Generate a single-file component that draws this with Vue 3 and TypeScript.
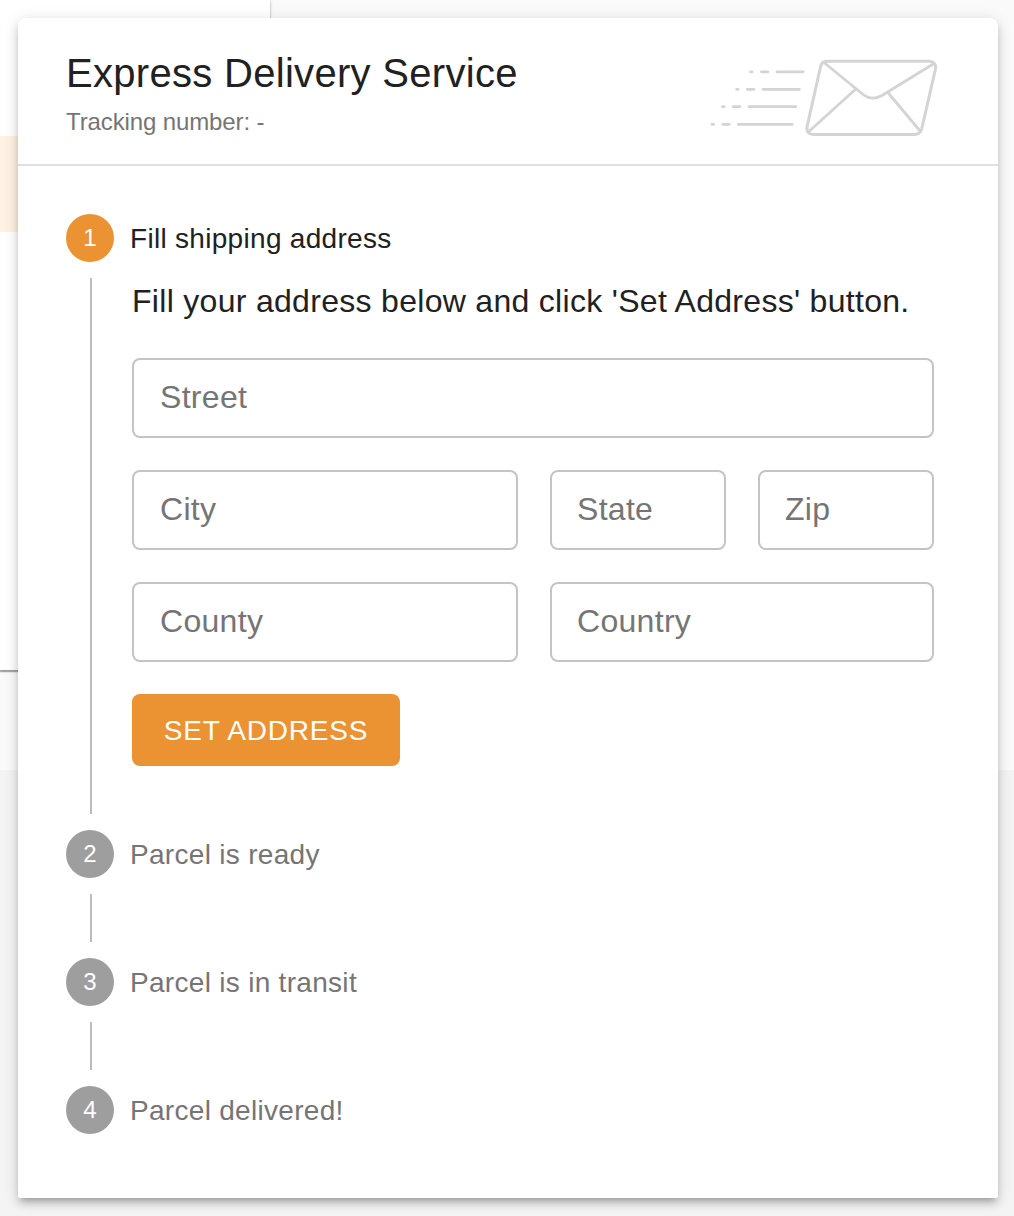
<script setup lang="ts">
interface Step {
  id: number
  label: string
}

interface Field {
  name: string
  placeholder: string
}

const steps: Step[] = [
  { id: 1, label: 'Fill shipping address' },
  { id: 2, label: 'Parcel is ready' },
  { id: 3, label: 'Parcel is in transit' },
  { id: 4, label: 'Parcel delivered!' },
]

const fields: Field[] = [
  { name: 'street', placeholder: 'Street' },
  { name: 'city', placeholder: 'City' },
  { name: 'state', placeholder: 'State' },
  { name: 'zip', placeholder: 'Zip' },
  { name: 'county', placeholder: 'County' },
  { name: 'country', placeholder: 'Country' },
]

const activeStep = 1
</script>

<template>
  <div class="stage">
    <div class="backdrop">
      <div class="backdrop-main">
        <div class="drawer"><div class="drawer-selected"></div></div>
      </div>
    </div>

    <main class="card">
      <header class="header">
        <div>
          <h1 class="title">Express Delivery Service</h1>
          <p class="tracking">Tracking number: -</p>
        </div>
        <svg class="logo" width="230" height="80" viewBox="709 58 230 80" fill="none" stroke="#d4d4d4" stroke-width="2.8" stroke-linecap="round" stroke-linejoin="round">
          <path d="M750.5 71.8h1.6M761.3 71.8h6.6M777 71.8h26.2M736.6 89.3h1.6M747.3 89.3h6.6M763 89.3h36.4M722.5 106.7h1.6M733.3 106.7h6.6M749 106.7h46.8M712 124.3h1.6M722.8 124.3h6.6M738.3 124.3h54" />
          <path stroke-width="3" d="M827 61.3H929.5C933.8 61.3 936.4 64.5 935.5 69L921.8 128.5C920.8 132.4 918.5 134.5 914.5 134.5H814C808.8 134.5 806.2 131.5 807.1 126.5L820.6 66.5C821.5 63 823.5 61.3 827 61.3Z" />
          <path d="M824 62.5L862.5 94Q871.5 101.5 882 95.5L934 63.5M855.3 89.5L808.3 132M887.5 92L920.5 131.5" />
        </svg>
      </header>

      <ol class="stepper">
        <li v-for="step in steps" :key="step.id" class="step">
          <div class="step-head" :class="{ active: step.id === activeStep }">
            <span class="badge">{{ step.id }}</span>
            <span class="label">{{ step.label }}</span>
          </div>
          <div v-if="step.id < steps.length" class="step-body">
            <form v-if="step.id === activeStep" class="form" @submit.prevent>
              <p class="hint">Fill your address below and click 'Set Address' button.</p>
              <div class="fields">
                <input
                  v-for="field in fields"
                  :key="field.name"
                  class="field"
                  :class="field.name"
                  type="text"
                  :placeholder="field.placeholder"
                  :aria-label="field.placeholder"
                />
              </div>
              <button class="submit" type="submit">SET ADDRESS</button>
            </form>
          </div>
        </li>
      </ol>
    </main>
  </div>
</template>

<style>
body {
  margin: 0;
  overflow: hidden;
}
</style>

<style scoped>
.stage {
  display: grid;
  width: 1014px;
  height: 1216px;
  overflow: hidden;
  font-family: Helvetica, 'Liberation Sans', Arial, sans-serif;
  color: #212121;
}

.backdrop,
.card {
  grid-area: 1 / 1;
  box-sizing: border-box;
}

.backdrop {
  background: #f4f4f4;
}

.backdrop-main {
  height: 770px;
  background: #fafafa;
}

.drawer {
  box-sizing: border-box;
  width: 270px;
  height: 670px;
  padding-top: 136px;
  background: #fff;
  box-shadow: 0 2px 1px rgba(0, 0, 0, 0.25), 0 1px 3px rgba(0, 0, 0, 0.25);
}

.drawer-selected {
  height: 96px;
  background: #fff1e3;
}

.card {
  z-index: 1;
  width: 980px;
  height: 1180px;
  margin: 18px 0 0 18px;
  border-radius: 8px 8px 2px 2px;
  background: #fff;
  box-shadow:
    0 6px 6px -4px rgba(0, 0, 0, 0.2),
    0 6px 8px 0 rgba(0, 0, 0, 0.14),
    0 2px 16px 0 rgba(0, 0, 0, 0.12);
}

.header {
  box-sizing: border-box;
  display: flex;
  justify-content: space-between;
  height: 148px;
  padding: 23px 59px 0 48px;
  border-bottom: 2px solid #e0e0e0;
}

.title {
  margin: 0;
  font-size: 40px;
  font-weight: 400;
  line-height: 64px;
  letter-spacing: 0.3px;
}

.tracking {
  margin: 0;
  font-size: 24px;
  line-height: 33px;
  letter-spacing: -0.12px;
  color: #757575;
}

.logo {
  margin-top: 17px;
}

.stepper {
  margin: 0;
  padding: 48px;
  list-style: none;
}

.step-head {
  display: flex;
  align-items: center;
  gap: 16px;
  height: 48px;
  color: #757575;
}

.badge {
  width: 48px;
  height: 48px;
  border-radius: 50%;
  background: #9e9e9e;
  color: #fff;
  font-size: 24px;
  line-height: 48px;
  text-align: center;
}

.active {
  color: #212121;
}

.active .badge {
  background: #eb9333;
}

.label {
  padding-top: 2px;
  font-size: 28px;
  line-height: 40px;
  letter-spacing: 0.3px;
}

.step-body {
  box-sizing: border-box;
  min-height: 48px;
  margin: 16px 0 16px 24px;
  padding-left: 40px;
  border-left: 2px solid #bdbdbd;
}

.form {
  height: 536px;
  width: 802px;
}

.hint {
  margin: 0 0 34px;
  font-size: 32px;
  line-height: 46px;
  letter-spacing: 0.3px;
  white-space: nowrap;
}

.fields {
  display: grid;
  grid-template-columns: 386px 176px 176px;
  gap: 32px;
}

.field {
  box-sizing: border-box;
  width: 100%;
  min-width: 0;
  height: 80px;
  padding: 0 26px 2px;
  border: 2px solid #c4c4c4;
  border-radius: 8px;
  outline: none;
  background: transparent;
  color: inherit;
  font: 32px Helvetica, 'Liberation Sans', Arial, sans-serif;
  letter-spacing: 0.3px;
}

.field::placeholder {
  color: #757575;
  opacity: 1;
}

.street {
  grid-column: 1 / -1;
}

.state,
.zip,
.country {
  padding-left: 25px;
}

.country {
  grid-column: 2 / -1;
}

.submit {
  display: block;
  width: 268px;
  height: 72px;
  margin-top: 32px;
  padding: 2px 0 0;
  border: 0;
  border-radius: 8px;
  background: #eb9333;
  color: #fff;
  font: 28px Helvetica, 'Liberation Sans', Arial, sans-serif;
  letter-spacing: 0.8px;
  white-space: nowrap;
}
</style>
